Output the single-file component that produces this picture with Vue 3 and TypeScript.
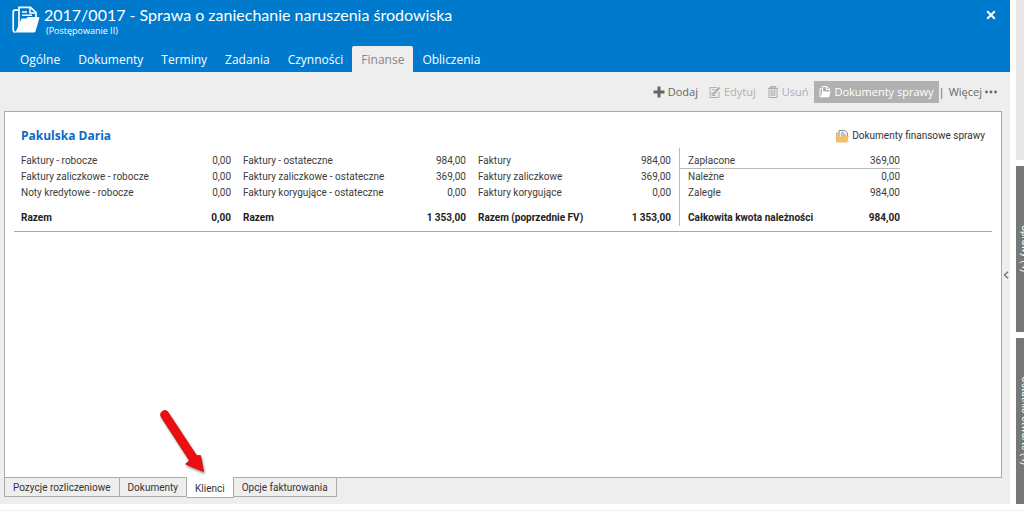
<script setup lang="ts">
import { ref } from 'vue'

interface Row { label: string; value: string }
interface Group { rows: Row[]; total: Row }

const mainTabs: string[] = ['Ogólne', 'Dokumenty', 'Terminy', 'Zadania', 'Czynności', 'Finanse', 'Obliczenia']
const activeMain = ref('Finanse')

const bottomTabs: string[] = ['Pozycje rozliczeniowe', 'Dokumenty', 'Klienci', 'Opcje fakturowania']
const activeBottom = ref('Klienci')

const groups: Group[] = [
  {
    rows: [
      { label: 'Faktury - robocze', value: '0,00' },
      { label: 'Faktury zaliczkowe - robocze', value: '0,00' },
      { label: 'Noty kredytowe - robocze', value: '0,00' },
    ],
    total: { label: 'Razem', value: '0,00' },
  },
  {
    rows: [
      { label: 'Faktury - ostateczne', value: '984,00' },
      { label: 'Faktury zaliczkowe - ostateczne', value: '369,00' },
      { label: 'Faktury korygujące - ostateczne', value: '0,00' },
    ],
    total: { label: 'Razem', value: '1 353,00' },
  },
  {
    rows: [
      { label: 'Faktury', value: '984,00' },
      { label: 'Faktury zaliczkowe', value: '369,00' },
      { label: 'Faktury korygujące', value: '0,00' },
    ],
    total: { label: 'Razem (poprzednie FV)', value: '1 353,00' },
  },
  {
    rows: [
      { label: 'Zapłacone', value: '369,00' },
      { label: 'Należne', value: '0,00' },
      { label: 'Zaległe', value: '984,00' },
    ],
    total: { label: 'Całkowita kwota należności', value: '984,00' },
  },
]
</script>

<template>
  <div class="screen">
    <div class="window">
      <header class="head">
        <div class="titlebar">
          <svg class="logo" viewBox="0 0 28 28" aria-hidden="true">
            <path d="M3.5 26.2C2 26.2 1.2 25.400 1.200 24V6Q1.200 4.200 3 4.200H6" fill="none" stroke="#fff" stroke-width="1.700" />
            <path d="M7 22V1.300H18.500L24 6.500V11" fill="none" stroke="#fff" stroke-width="1.700" />
            <path d="M18 1.500V7H24M10 6H15M10 9.300H20" fill="none" stroke="#fff" stroke-width="1.500" />
            <path d="M9.500 12.500H14L16 11H26.500Q27.700 11 27.300 12.200L23.500 25.500Q23.200 26.500 22 26.500H3.500Z" fill="#fff" />
          </svg>
          <div class="titles">
            <h1>2017/0017 - Sprawa o zaniechanie naruszenia środowiska</h1>
            <p>(Postępowanie II)</p>
          </div>
          <button class="close" type="button" aria-label="Zamknij">
            <svg viewBox="0 0 10 10"><path d="M1.200 1.200L8.800 8.800M8.800 1.200L1.200 8.800" stroke="#fff" stroke-width="2" /></svg>
          </button>
        </div>
        <nav class="tabs">
          <button v-for="t in mainTabs" :key="t" type="button" :class="{ active: t === activeMain }" @click="activeMain = t">{{ t }}</button>
        </nav>
      </header>

      <div class="toolbar">
        <button type="button" class="tool add">
          <svg viewBox="0 0 12 12"><path d="M6 .5V11.500M.5 6H11.500" stroke="#666" stroke-width="3" /></svg>Dodaj
        </button>
        <button type="button" class="tool off edit">
          <svg viewBox="0 0 12 12" fill="none" stroke="#b0b0b0"><path d="M7.500 1.500H1V11.500H10V6" /><path d="M4 8.500L10.500 1.500" stroke-width="2.500" /><path d="M3 6V9.500H6.500M3 3.500H6" /></svg>Edytuj
        </button>
        <button type="button" class="tool off remove">
          <svg viewBox="0 0 12 12" fill="none" stroke="#aaa"><path d="M1 2.500H11M4 2V.7H8V2" stroke-width="1.300" /><path d="M2 4V11.500H10V4M4.200 4V10M6 4V10M7.800 4V10" /></svg>Usuń
        </button>
        <button type="button" class="tool dark">
          <svg viewBox="0 0 12 12" fill="none" stroke="#fff"><path d="M1.500 11H1V2.500H2.500M3.500 8V.5H8L10.500 3V4.500M7.500 .5V3.500H10.500" /><path d="M4 5.500H11.700L10 11.200H1.500Z" fill="#fff" stroke="none" /></svg>Dokumenty sprawy
        </button>
        <span class="bar">|</span>
        <button type="button" class="tool more">Więcej
          <svg class="dots" viewBox="0 0 12 4" fill="#666"><circle cx="1.500" cy="2" r="1.400" /><circle cx="6" cy="2" r="1.400" /><circle cx="10.500" cy="2" r="1.400" /></svg>
        </button>
      </div>

      <div class="body">
        <main class="panel">
          <section class="client">
            <div class="client-head">
              <h2>Pakulska Daria</h2>
              <a href="#">
                <svg viewBox="0 0 13 13"><path d="M.5 12V3H3" fill="#f6d79c" stroke="#e0b060" /><path d="M3 .5H9L11.500 3V8H3Z" fill="#f2f4f6" stroke="#8a929c" /><path d="M5 3H8M5 5H10" stroke="#7890aa" /><path d="M.5 4.500H2.500L4 7L5.500 6H12.700L11.500 12.500H.7Z" fill="#f3bf68" /></svg>
                Dokumenty finansowe sprawy
              </a>
            </div>
            <div class="groups">
              <table v-for="(g, i) in groups" :key="i" :class="{ last: i === 3 }">
                <tbody>
                  <tr v-for="r in g.rows" :key="r.label"><th scope="row">{{ r.label }}</th><td>{{ r.value }}</td></tr>
                </tbody>
                <tfoot>
                  <tr><th scope="row">{{ g.total.label }}</th><td>{{ g.total.value }}</td></tr>
                </tfoot>
              </table>
            </div>
          </section>
          <svg class="pointer" viewBox="0 0 50 66" aria-hidden="true">
            <path d="M9.500 3.500C6.500 .8 1 4 3 8.500L31.500 52.500L27.500 56L45.500 63.500L42.500 47.500L38.500 47.500Z" fill="#f00d10" stroke="#d00000" stroke-width=".7" />
          </svg>
        </main>
        <button class="expand" type="button" aria-label="Rozwiń">
          <svg viewBox="0 0 6 8"><path d="M5 .7L1.500 4L5 7.300" fill="none" stroke="#777" stroke-width="1.500" /></svg>
        </button>
      </div>

      <nav class="sheets">
        <button v-for="t in bottomTabs" :key="t" type="button" :class="{ active: t === activeBottom }" @click="activeBottom = t">{{ t }}</button>
      </nav>
    </div>

    <aside class="side">
      <div class="card light"></div>
      <div class="card"><span>Sprawy (4)</span></div>
      <div class="card"><span>Ostatnio otwarte (4)</span></div>
    </aside>
  </div>
  <footer class="edge"></footer>
</template>

<style>
html, body { margin: 0; height: 100%; }
#app { height: 100%; display: flex; flex-direction: column; }
</style>

<style scoped>
* { box-sizing: border-box; }
.screen {
  flex: 1;
  min-height: 0;
  display: flex;
  gap: 6px;
  overflow: hidden;
  background: #fff;
  color: #3c3c3c;
  font: 10px/16px Roboto, "Open Sans", sans-serif;
}
.edge { height: 7px; border-bottom: 1px solid #eee; background: #fff; }
button { font: inherit; color: inherit; border: 0; background: none; padding: 0; margin: 0; white-space: nowrap; }
.window { flex: 1; min-width: 0; display: flex; flex-direction: column; background: #eee; }
.head { background: #007acc; color: #fff; font-family: "Open Sans", "Noto Sans", sans-serif; }
.titlebar { display: flex; align-items: flex-start; height: 46px; padding: 6px 14px 0 12px; gap: 4px; }
.logo { width: 28px; height: 28px; }
.titles { flex: 1; }
h1 { margin: 0; font-family: Lato, "Open Sans", sans-serif; font-size: 16px; line-height: 18px; font-weight: 400; }
.titles p { margin: 0; padding-left: 2px; font-size: 9px; line-height: 14px; }
.close { margin-top: 4px; line-height: 0; }
.close svg { width: 10px; height: 10px; }
.tabs { display: flex; padding-left: 11px; }
.tabs button { height: 26px; padding: 2px 9px 0; font-size: 12px; line-height: 24px; border-radius: 2px 2px 0 0; }
.tabs .active { background: #eee; color: #888; }
.toolbar { display: flex; align-items: center; justify-content: flex-end; height: 39px; padding-right: 13px; border-top: 1px solid #e4f0f8; color: #666; font-family: "Open Sans", "Noto Sans", sans-serif; font-size: 11px; }
.tool { display: flex; align-items: center; gap: 3px; height: 22px; }
.tool svg { width: 12px; height: 12px; }
.off { color: #b0b0b0; }
.edit { margin-left: 11px; }
.remove { margin-left: 11px; }
.dark { margin-left: 6px; padding: 0 5px; background: #b1b1b1; color: #fff; }
.bar { margin-right: 4px; }
.tool .dots { height: 4px; }
.body { flex: 1; min-height: 0; display: flex; padding-left: 4px; }
.panel { position: relative; flex: 1; min-width: 0; border: 1px solid #aaa; background: #fff; padding: 16px 9px; }
.client { border-bottom: 1px solid #aaa; padding: 0 7px 5px; }
.client-head { display: flex; justify-content: space-between; align-items: center; height: 16px; }
h2 { margin: 0; font-family: "Open Sans", "Noto Sans", sans-serif; font-size: 12px; line-height: 16px; color: #0b6ac6; }
a { display: flex; align-items: center; gap: 3px; color: #333; text-decoration: none; }
a svg { width: 13px; height: 13px; }
.groups { display: grid; grid-template-columns: 210fr 223fr 193fr 217fr 73fr; column-gap: 12px; margin-top: 4px; }
table { border-collapse: separate; border-spacing: 0; width: 100%; padding-top: 5px; }
th { text-align: left; font-weight: 400; padding: 0; }
td { text-align: right; padding: 0; }
tfoot th, tfoot td { padding-top: 9px; font-weight: 700; color: #222; }
.last { margin-left: -4px; width: calc(100% + 4px); border-left: 1px solid #bbb; }
.last th { padding-left: 8px; }
.last tbody tr:first-child > * { line-height: 15px; border-bottom: 1px solid #bbb; }
.pointer { position: absolute; left: 153px; bottom: 3px; width: 50px; height: 66px; filter: drop-shadow(1px 2px 1px #888); }
.expand { width: 8px; align-self: center; line-height: 0; padding-bottom: 40px; }
.expand svg { width: 6px; height: 8px; }
.sheets { display: flex; align-items: flex-start; height: 26px; padding-left: 4px; color: #333; }
.sheets button { height: 19px; padding: 2px 8px 0; border: 1px solid #aaa; border-top: 0; border-left-width: 0; background: #eee; }
.sheets button:first-child { border-left-width: 1px; }
.sheets .active { position: relative; height: 21px; margin-top: -1px; padding-top: 4px; background: #fff; }
.side { width: 8px; flex: none; display: flex; flex-direction: column; gap: 6px; overflow: hidden; }
.card { flex: 166; background: #777; color: #fff; overflow: hidden; display: flex; align-items: center; }
.card.light { flex: 160; background: #e8e8e8; }
.card span { writing-mode: vertical-rl; font-size: 10px; line-height: 12px; white-space: nowrap; margin-left: 3px; }
</style>
